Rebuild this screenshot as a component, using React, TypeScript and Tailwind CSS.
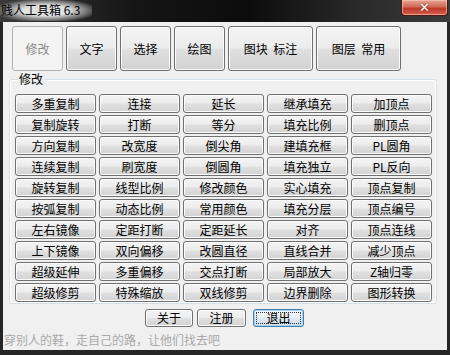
import React from "react";

const rows: string[][] = [
  ["多重复制", "连接", "延长", "继承填充", "加顶点"],
  ["复制旋转", "打断", "等分", "填充比例", "删顶点"],
  ["方向复制", "改宽度", "倒尖角", "建填充框", "PL圆角"],
  ["连续复制", "刷宽度", "倒圆角", "填充独立", "PL反向"],
  ["旋转复制", "线型比例", "修改颜色", "实心填充", "顶点复制"],
  ["按弧复制", "动态比例", "常用颜色", "填充分层", "顶点编号"],
  ["左右镜像", "定距打断", "定距延长", "对齐", "顶点连线"],
  ["上下镜像", "双向偏移", "改圆直径", "直线合并", "减少顶点"],
  ["超级延伸", "多重偏移", "交点打断", "局部放大", "Z轴归零"],
  ["超级修剪", "特殊缩放", "双线修剪", "边界删除", "图形转换"],
];

const btn =
  "flex items-center justify-center rounded-[3px] border border-[#707070] bg-[linear-gradient(#f4f4f4_0%,#ececec_48%,#e0e0e0_52%,#d2d2d2_100%)] shadow-[inset_0_0_0_1px_#fbfbfb] text-black text-[12px] leading-[14px]";

export default function App() {
  return (
    <div className="w-[450px] h-[355px] flex flex-col bg-[#262626] overflow-hidden font-['Noto_Sans_CJK_SC','Noto_Sans',sans-serif]">
      {/* Title bar */}
      <div className="h-[22px] flex items-start justify-between bg-[linear-gradient(90deg,#3a3a3a_0%,#151515_30%,#0c0c0c_55%,#2a2a2a_80%,#3b3b3b_100%)]">
        <div className="h-[21px] pl-[1px] pr-[12px] pt-[3px] text-[12px] leading-[14px] text-black bg-[radial-gradient(ellipse_at_center,rgba(235,235,235,0.95)_35%,rgba(200,200,200,0.45)_65%,rgba(0,0,0,0)_82%)]">
          贱人工具箱 6.3
        </div>
        <div className="mr-[2px] w-[47px] h-[16px] rounded-b-[4px] border border-t-0 border-[#4a1a14] bg-[linear-gradient(#e7a796_0%,#d06a55_45%,#c0392b_55%,#d0604a_100%)] shadow-[inset_0_0_0_1px_rgba(255,200,190,0.6)] flex items-center justify-center">
          <span className="text-white text-[13px] font-bold leading-[14px] font-['DejaVu_Sans',sans-serif] [text-shadow:0_0_2px_#5a1a10]">
            ✕
          </span>
        </div>
      </div>

      {/* Client area */}
      <div className="flex-1 mx-[3px] mb-[5px] bg-[#f0f0f0] flex flex-col">
        {/* Tabs */}
        <div className="mt-[4px] ml-[9px] flex gap-[3px] h-[45px]">
          <div className="w-[51px] flex items-center justify-center rounded-[3px] border border-[#adb2b5] bg-[#f4f4f4] text-[#8a8a8a] text-[12px] leading-[14px]">
            修改
          </div>
          <div className={`${btn} w-[51px]`}>文字</div>
          <div className={`${btn} w-[51px]`}>选择</div>
          <div className={`${btn} w-[51px]`}>绘图</div>
          <div className={`${btn} w-[85px]`}>图块&nbsp;&nbsp;标注</div>
          <div className={`${btn} w-[85px]`}>图层&nbsp;&nbsp;常用</div>
        </div>

        {/* Group box */}
        <div className="relative mt-[8px] ml-[6px] mr-[10px] h-[225px] rounded-[3px] border border-[#d5dfe5] shadow-[inset_0_0_0_1px_#ffffff] pl-[5px] pt-[14px]">
          <div className="absolute -top-[8px] left-[8px] px-[1px] bg-[#f0f0f0] text-[12px] leading-[14px] text-black">
            修改
          </div>
          <div className="grid grid-cols-[repeat(5,81px)] gap-x-[3px] gap-y-[2px]">
            {rows.flat().map((t, i) => (
              <div key={i} className={`${btn} h-[19px]`}>
                {t}
              </div>
            ))}
          </div>
        </div>

        {/* Bottom buttons */}
        <div className="mt-[5px] pl-[142px] flex h-[18px]">
          <div className={`${btn} w-[48px]`}>关于</div>
          <div className={`${btn} w-[49px] ml-[4px]`}>注册</div>
          <div className="ml-[7px] w-[51px] flex items-center justify-center rounded-[3px] border border-[#3c7fb1] bg-[linear-gradient(#f4f8fb_0%,#eaf1f6_48%,#dde8f0_52%,#d0dde8_100%)] shadow-[inset_0_0_0_1px_#a9d6f2] p-[2px]">
            <div className="w-full h-full flex items-center justify-center border border-dotted border-[#333] text-black text-[12px] leading-[12px]">
              退出
            </div>
          </div>
        </div>

        {/* Footer */}
        <div className="mt-[6px] pl-[1px] text-[12px] leading-[14px] text-[#a9a9a9]">
          穿别人的鞋，走自己的路，让他们找去吧
        </div>
      </div>
    </div>
  );
}
